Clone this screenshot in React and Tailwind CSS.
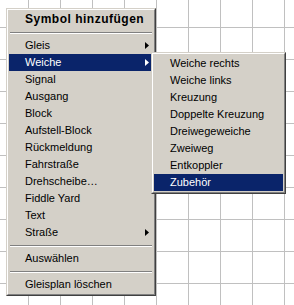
import React from 'react';

const Arrow = ({ white }) => (
  <svg width="4" height="7" viewBox="0 0 4 7" className="absolute right-[4px] top-[5px]">
    <path d="M0 0 L4 3.5 L0 7 Z" fill={white ? '#ffffff' : '#000000'} />
  </svg>
);

const Item = ({ label, active, sub }) => (
  <div
    className={`relative h-[17px] pl-4 pr-5 leading-[17px] whitespace-nowrap ${
      active ? 'bg-[#0a246a] text-white' : 'text-black'
    }`}
  >
    {label}
    {sub && <Arrow white={active} />}
  </div>
);

const Sep = () => (
  <div className="h-[9px] flex flex-col justify-center px-px">
    <div className="h-px bg-[#808080]" />
    <div className="h-px bg-white" />
  </div>
);

const Frame = ({ className, children }) => (
  <div
    className={`absolute border border-t-[#d4d0c8] border-l-[#d4d0c8] border-r-[#404040] border-b-[#404040] bg-[#d4d0c8] ${className}`}
  >
    <div className="border border-t-white border-l-white border-r-[#808080] border-b-[#808080] p-px">
      {children}
    </div>
  </div>
);

export default function App() {
  const main = ['Signal', 'Ausgang', 'Block', 'Aufstell-Block', 'Rückmeldung', 'Fahrstraße', 'Drehscheibe…', 'Fiddle Yard', 'Text'];
  const weichen = ['Weiche rechts', 'Weiche links', 'Kreuzung', 'Doppelte Kreuzung', 'Dreiwegeweiche', 'Zweiweg', 'Entkoppler'];

  return (
    <div className="relative w-[294px] h-[305px] overflow-hidden bg-white bg-[linear-gradient(to_right,#c0c0c0_1px,transparent_1px),linear-gradient(to_bottom,#c0c0c0_1px,transparent_1px)] bg-size-[32px_32px] bg-position-[28px_27px] text-[11px] font-['Liberation_Sans',sans-serif]">
      {/* Hauptmenü */}
      <Frame className="left-[6px] top-[8px] w-[150px]">
        <div className="h-[17px] pl-4 leading-[17px] font-bold text-[12px] tracking-[0.5px] whitespace-nowrap">
          Symbol hinzufügen
        </div>
        <Sep />
        <Item label="Gleis" sub />
        <Item label="Weiche" active sub />
        {main.map((m) => (
          <Item key={m} label={m} />
        ))}
        <Item label="Straße" sub />
        <Sep />
        <Item label="Auswählen" />
        <Sep />
        <Item label="Gleisplan löschen" />
      </Frame>

      {/* Untermenü Weiche */}
      <Frame className="left-[151px] top-[52px] w-[135px]">
        {weichen.map((w) => (
          <Item key={w} label={w} />
        ))}
        <Item label="Zubehör" active />
      </Frame>
    </div>
  );
}
